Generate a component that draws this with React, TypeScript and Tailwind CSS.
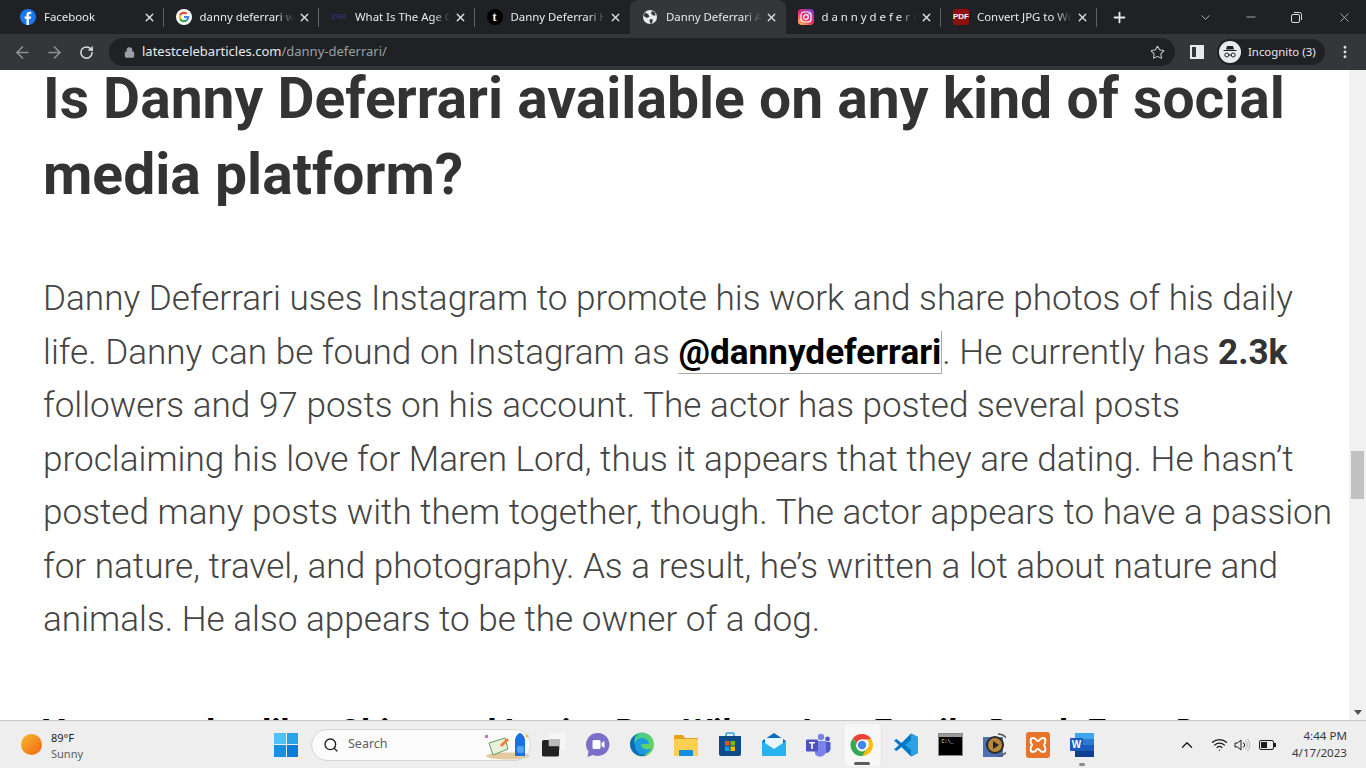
import { ArrowLeft, ArrowRight, ChevronDown, ChevronUp, Lock, Minus, MoreVertical, Plus, RotateCw, Search, Star, Wifi, X } from "lucide-react";
import type { ReactNode } from "react";

const ui = "font-['Noto_Sans','Open_Sans',sans-serif]";

function ChromeIcon({ size = 24 }: { size?: number }) {
  return (
    <svg width={size} height={size} viewBox="0 0 48 48">
      <path d="M24 2a22 22 0 0 1 19 11H24a11 11 0 0 0-10.500 7.500L5.500 11A22 22 0 0 1 24 2z" fill="#ea4335" />
      <path d="M43 13a22 22 0 0 1-18 33l9-15.500A11 11 0 0 0 33 13z" fill="#fbbc05" />
      <path d="M5.500 11A22 22 0 0 0 25 46l9-15.500a11 11 0 0 1-20.500-10z" fill="#34a853" />
      <circle cx="24" cy="24" r="11" fill="#fff" />
      <circle cx="24" cy="24" r="8.500" fill="#4285f4" />
    </svg>
  );
}

const favicons: Record<string, ReactNode> = {
  facebook: (
    <svg width="16" height="16" viewBox="0 0 16 16">
      <circle cx="8" cy="8" r="8" fill="#1877f2" />
      <path d="M8.900 16V9.800h1.900l.4-2.300H8.900V6.100c0-.7.3-1.200 1.300-1.200h1V2.900c-.5-.1-1.100-.2-1.700-.2-1.800 0-3 1.100-3 3.100v1.700H4.600v2.300h1.900V16z" fill="#fff" />
    </svg>
  ),
  google: (
    <svg width="16" height="16" viewBox="0 0 16 16">
      <circle cx="8" cy="8" r="8" fill="#fff" />
      <path d="M13.200 8.100c0-.4 0-.7-.1-1H8v2h2.900c-.1.6-.5 1.200-1.100 1.500l1.700 1.300c1-.9 1.700-2.200 1.700-3.800z" fill="#4285f4" />
      <path d="M8 13.300c1.400 0 2.600-.5 3.500-1.300l-1.700-1.400c-.5.3-1.100.5-1.800.5-1.400 0-2.500-.9-2.900-2.100L3.300 10.400C4.200 12.100 6 13.300 8 13.300z" fill="#34a853" />
      <path d="M5.100 9A3.100 3.100 0 0 1 5.100 7L3.300 5.600a5.300 5.300 0 0 0 0 4.800z" fill="#fbbc05" />
      <path d="M8 4.800c.8 0 1.500.3 2 .8l1.500-1.500A5.200 5.200 0 0 0 3.300 5.600L5.100 7C5.500 5.700 6.600 4.800 8 4.800z" fill="#ea4335" />
    </svg>
  ),
  zgr: <span className="text-[7px] font-bold text-[#3a2d6e] font-['Liberation_Sans',sans-serif]">ZGR</span>,
  tumblr: (
    <span className="flex h-4 w-4 items-center justify-center rounded-full bg-black text-[12px] font-bold leading-none text-white font-['Liberation_Serif',serif]">t</span>
  ),
  globe: (
    <svg width="16" height="16" viewBox="0 0 16 16">
      <circle cx="8" cy="8" r="7" fill="#e8eaed" />
      <path d="M3 3.500 6 5l1.500 2.500L5 9 3.500 8 1.500 7zM10 2l3 1.500.5 3L11 6.500 9 4.500zM8 10l3 .5L10 14l-1.500 1L7.500 12z" fill="#35363a" />
    </svg>
  ),
  instagram: (
    <svg width="16" height="16" viewBox="0 0 16 16">
      <defs>
        <linearGradient id="ig-grad" x1="0.1" y1="1" x2="0.9" y2="0">
          <stop offset="0" stopColor="#fdc14f" />
          <stop offset="0.45" stopColor="#ee2f6b" />
          <stop offset="1" stopColor="#7a3bd1" />
        </linearGradient>
      </defs>
      <rect width="16" height="16" rx="4" fill="url(#ig-grad)" />
      <rect x="3" y="3" width="10" height="10" rx="3" fill="none" stroke="#fff" strokeWidth="1.200" />
      <circle cx="8" cy="8" r="2.300" fill="none" stroke="#fff" strokeWidth="1.200" />
      <circle cx="11" cy="5" r=".7" fill="#fff" />
    </svg>
  ),
  pdf: (
    <span className="flex h-4 w-[18px] items-center justify-center rounded-[2px] bg-[#8f0f0f] text-[8px] font-bold leading-none text-white font-['Liberation_Sans',sans-serif]">PDF</span>
  ),
};

const tabs = [
  { icon: "facebook", title: "Facebook" },
  { icon: "google", title: "danny deferrari wiki" },
  { icon: "zgr", title: "What Is The Age Of" },
  { icon: "tumblr", title: "Danny Deferrari Height" },
  { icon: "globe", title: "Danny Deferrari Age", active: true },
  { icon: "instagram", title: "d a n n y d e f e r r a r i" },
  { icon: "pdf", title: "Convert JPG to Word" },
];

function TabStrip() {
  return (
    <div className={`flex h-[34px] items-stretch bg-[#202124] pl-2 ${ui}`}>
      {tabs.map((t, i) => (
        <div
          key={t.title}
          className={`relative flex w-[155.5px] shrink-0 items-center pl-3 pr-[8px] ${t.active ? "rounded-t-[8px] bg-[#35363a]" : ""}`}
        >
          <div className="flex w-4 shrink-0 items-center justify-center">{favicons[t.icon]}</div>
          <div className="ml-2 min-w-0 flex-1 overflow-hidden whitespace-nowrap text-[11.400px] text-[#e8eaed] [mask-image:linear-gradient(to_right,black_82%,transparent)]">
            {t.title}
          </div>
          <X size={13} strokeWidth={2.5} className="ml-1 shrink-0 text-[#dfe1e5]" />
          {!t.active && !tabs[i + 1]?.active && <div className="absolute right-0 top-[8px] h-[19px] w-px bg-[#5f6368]" />}
        </div>
      ))}
      <div className="ml-[14px] flex items-center">
        <Plus size={17} strokeWidth={2.5} className="text-[#e8eaed]" />
      </div>
      <div className="ml-auto flex items-center text-[#dadce0]">
        <ChevronDown size={15} strokeWidth={1.2} className="mr-[31px]" />
        <Minus size={14} strokeWidth={1.2} className="mr-[33px]" />
        <svg width="11" height="11" viewBox="0 0 11 11" fill="none" stroke="currentColor" className="mr-[35px]">
          <rect x=".5" y="2.500" width="8" height="8" rx="1.500" />
          <path d="M3 .5h5.500a2 2 0 0 1 2 2V8" />
        </svg>
        <X size={15} strokeWidth={1.1} className="mr-[14px]" />
      </div>
    </div>
  );
}

function Toolbar() {
  return (
    <div className={`flex h-9 items-center bg-[#35363a] ${ui}`}>
      <ArrowLeft size={19} strokeWidth={2} className="ml-[13px] text-[#8f9194]" />
      <ArrowRight size={19} strokeWidth={2} className="ml-[13px] text-[#8f9194]" />
      <RotateCw size={15} strokeWidth={2.4} className="ml-[15px] text-[#dadce0]" />
      <div className="ml-[15px] flex h-7 w-[1066px] items-center rounded-full bg-[#202124] pl-[15px]">
        <Lock size={11} strokeWidth={2.5} fill="#9aa0a6" className="text-[#9aa0a6]" />
        <div className="ml-[7px] text-[13px] text-[#e8eaed]">
          latestcelebarticles.com<span className="text-[#9aa0a6]">/danny-deferrari/</span>
        </div>
        <Star size={15} strokeWidth={1.7} className="ml-auto mr-[10px] text-[#c4c7c5]" />
      </div>
      <div className="ml-[15px] flex h-[14px] w-[14px] items-center border-2 border-[#e8eaed]">
        <div className="ml-auto h-full w-[6px] bg-[#e8eaed]" />
      </div>
      <div className="ml-[13px] flex h-[26px] w-[108px] items-center rounded-full bg-[#202124] pl-[2px]">
        <div className="flex h-[22px] w-[22px] items-center justify-center rounded-full bg-[#e8eaed]">
          <svg width="16" height="16" viewBox="0 0 16 16" fill="#202124">
            <path d="M5 2h6l1 3.500H4zM1.500 6h13v1h-13z" />
            <circle cx="4.800" cy="11" r="2" fill="none" stroke="#202124" />
            <circle cx="11.200" cy="11" r="2" fill="none" stroke="#202124" />
            <path d="M6.800 10.500h2.400v1H6.800z" />
          </svg>
        </div>
        <span className="ml-[7px] whitespace-nowrap text-[11.400px] text-[#e8eaed]">Incognito (3)</span>
      </div>
      <MoreVertical size={16} strokeWidth={2.4} className="ml-[12px] text-[#dadce0]" />
    </div>
  );
}

function Article() {
  return (
    <div className="flex h-[650px] overflow-hidden bg-white font-['Roboto',sans-serif]">
      <div className="min-w-0 flex-1 pl-[43px]">
        <h2 className="mt-[-9px] whitespace-nowrap text-[57px] font-bold leading-[76px] text-[#333]">
          Is Danny Deferrari available on any kind of social
          <br />
          media platform?
        </h2>
        <p className="mt-[59px] whitespace-nowrap text-[35.140px] font-light leading-[53.500px] text-[#444]">
          Danny Deferrari uses Instagram to promote his work and share photos of his daily
          <br />
          life. Danny can be found on Instagram as{" "}
          <span className="border-b border-r border-[#aaa] font-bold text-black">@dannydeferrari</span>. He currently has{" "}
          <strong className="font-bold text-[#333]">2.3k</strong>
          <br />
          followers and 97 posts on his account. The actor has posted several posts
          <br />
          proclaiming his love for Maren Lord, thus it appears that they are dating. He hasn’t
          <br />
          posted many posts with them together, though. The actor appears to have a passion
          <br />
          for nature, travel, and photography. As a result, he’s written a lot about nature and
          <br />
          animals. He also appears to be the owner of a dog.
        </p>
        <p className="mt-[59px] whitespace-nowrap text-[35.140px] font-bold text-black">
          You may also like: <em>Chitra and Louise Roe Wilson Age, Family, Death Exes, D</em>
        </p>
      </div>
      <div className="flex w-[17px] shrink-0 flex-col items-center bg-[#f1f1f1] pt-[381px]">
        <div className="h-[48px] w-[13px] bg-[#c1c1c1]" />
        <div className="mt-auto mb-[5px] h-0 w-0 border-x-[4px] border-t-[5px] border-x-transparent border-t-[#505050]" />
      </div>
    </div>
  );
}

const B = ({ children }: { children: ReactNode }) => (
  <div className="flex h-[40px] w-[44px] shrink-0 items-center justify-center">{children}</div>
);

function TaskIcons() {
  return (
    <>
      <B>
        <div className="relative h-6 w-6">
          <div className="absolute right-0 top-0 h-[17px] w-[17px] rounded-[2px] bg-[#f5f5f5]" />
          <div className="absolute left-[7px] top-[6px] h-[11px] w-[11px] bg-[#bbb]" />
          <div className="absolute bottom-0 left-0 h-[17px] w-[17px] rounded-[2px] bg-[#222] [clip-path:polygon(0_0,40%_0,40%_40%,100%_40%,100%_100%,0_100%)]" />
        </div>
      </B>
      <B>
        <svg width="24" height="26" viewBox="0 0 24 26">
          <path d="M12 1a11.500 11.500 0 1 1-5 21.900L1.500 25l1-5.500A11.500 11.500 0 0 1 12 1z" fill="#7b6fc9" />
          <rect x="6.500" y="8" width="8" height="9" rx="1.500" fill="#fff" />
          <path d="m15.500 11 3-2v7l-3-2z" fill="#fff" />
        </svg>
      </B>
      <B>
        <svg width="24" height="25" viewBox="0 0 24 24">
          <defs>
            <linearGradient id="edge-a" x1="0" y1="0" x2="1" y2="1">
              <stop offset="0" stopColor="#36c6a0" />
              <stop offset="1" stopColor="#7ad84b" />
            </linearGradient>
          </defs>
          <circle cx="12" cy="12" r="12" fill="url(#edge-a)" />
          <path d="M0 12C0 5 5.500 1 11 1c-5 0-7 4-6.500 9 .5 7 6 12 12.500 12.500A12 12 0 0 1 0 12z" fill="#0f6cbd" />
          <path d="M5 12c0-4 3-6.500 7-6.500s7 2.500 7 6h-7c-1.500 0-1 3 1.500 4.500 2.500 1.500 6 1.200 8-.5-1.500 4-5 6.500-9 6.500C7.500 22 5 17 5 12z" fill="#1a9be0" />
        </svg>
      </B>
      <B>
        <svg width="24" height="24" viewBox="0 0 24 24">
          <path d="M0 3a1 1 0 0 1 1-1h8l2 3h12a1 1 0 0 1 1 1v2H0z" fill="#e4a11b" />
          <rect y="6" width="24" height="17" rx="1" fill="#fcd053" />
          <rect x="5" y="17" width="14" height="6" rx="1" fill="#0f8fdd" />
        </svg>
      </B>
      <B>
        <svg width="24" height="25" viewBox="0 0 24 25">
          <path d="M8 5V2.500A1.500 1.500 0 0 1 9.500 1h5A1.500 1.500 0 0 1 16 2.500V5" fill="none" stroke="#29a7e1" strokeWidth="1.600" />
          <path d="M1 4h22v18a2 2 0 0 1-2 2H3a2 2 0 0 1-2-2z" fill="#0f4b8a" />
          <rect x="7" y="9" width="4.500" height="4.500" fill="#f25022" />
          <rect x="12.500" y="9" width="4.500" height="4.500" fill="#7fba00" />
          <rect x="7" y="14.500" width="4.500" height="4.500" fill="#00a4ef" />
          <rect x="12.500" y="14.500" width="4.500" height="4.500" fill="#ffb900" />
        </svg>
      </B>
      <B>
        <svg width="24" height="25" viewBox="0 0 24 25">
          <path d="M0 9 12 1l12 8v14H0z" fill="#0b6cb8" />
          <path d="M3 6h18v8l-9 5-9-5z" fill="#eaf6fd" />
          <path d="M0 9l12 8 12-8v14a1 1 0 0 1-1 1H1a1 1 0 0 1-1-1z" fill="#29b3ec" />
        </svg>
      </B>
      <B>
        <svg width="25" height="24" viewBox="0 0 25 24">
          <circle cx="15" cy="4" r="3.200" fill="#7b83eb" />
          <circle cx="21.500" cy="6" r="2.400" fill="#5059c9" />
          <path d="M18 9h6.500v7a4 4 0 0 1-6.500 3z" fill="#5059c9" />
          <path d="M9 8h11v10a6 6 0 0 1-11 3z" fill="#7b83eb" />
          <rect y="6.500" width="12" height="12" rx="1.200" fill="#4b53bc" />
          <path d="M3 9h6v1.500H6.800V16H5.200v-5.500H3z" fill="#fff" />
        </svg>
      </B>
      <div className="relative mx-[5px] flex h-[42px] w-[34px] shrink-0 items-center justify-center rounded-[4px] bg-[#f7f7f7] shadow-[2px_0_0_#f7f7f7,3px_0_0_#e3e3e3]">
        <ChromeIcon />
        <div className="absolute bottom-[1px] left-[9px] h-[3px] w-4 rounded-full bg-[#5c5c5c]" />
      </div>
      <B>
        <svg width="24" height="24" viewBox="0 0 24 24">
          <path d="M17 .5 24 4v16l-7 3.500L7.500 14 2.500 18 0 16.500 5 12 0 7.500 2.500 6l5 4z" fill="#0078c8" />
          <path d="M17 .5 24 4v16l-7 3.500zM17 7l-6 5 6 5z" fill="#2aa2e8" fillRule="evenodd" />
        </svg>
      </B>
      <B>
        <div className="h-[21px] w-[23px] border-t-[3px] border-[#9a9a9a] bg-black pl-[3px] pt-[2px] font-['Liberation_Mono',monospace] text-[5px] leading-[6px] text-white shadow-[0_0_0_1px_#888]">
          C:\_
        </div>
      </B>
      <B>
        <svg width="24" height="26" viewBox="0 0 24 26">
          <rect x="1" y="5" width="20" height="20" fill="#4d6fb5" />
          <circle cx="13" cy="13" r="9" fill="#2a2a2a" />
          <circle cx="13" cy="13" r="7" fill="#b9873a" />
          <path d="m11 9 6 4-6 4z" fill="#222" />
          <path d="M16 2a11 11 0 0 1 0 22" fill="none" stroke="#555" strokeWidth="1.500" />
        </svg>
      </B>
      <B>
        <svg width="24" height="26" viewBox="0 0 24 26">
          <rect width="24" height="26" rx="3" fill="#e8742a" />
          <path d="M7 6c3 0 3 3 5 3s2-3 5-3 3 4 1 7c2 3 2 7-1 7s-3-3-5-3-2 3-5 3-3-4-1-7C4 10 4 6 7 6z" fill="none" stroke="#fff" strokeWidth="2" />
        </svg>
      </B>
      <div className="relative flex h-[42px] w-[44px] shrink-0 items-center justify-center">
        <svg width="24" height="24" viewBox="0 0 24 24">
          <rect x="5" width="19" height="6" fill="#41a5ee" />
          <rect x="5" y="6" width="19" height="6" fill="#2b7cd3" />
          <rect x="5" y="12" width="19" height="6" fill="#185abd" />
          <rect x="5" y="18" width="19" height="6" fill="#103f91" />
          <rect y="5" width="13" height="13" rx="1" fill="#1a5cb8" />
          <text x="6.500" y="15" textAnchor="middle" fontSize="10" fontWeight="700" fill="#fff" fontFamily="Liberation Sans">W</text>
        </svg>
        <div className="absolute bottom-0 left-[19px] h-[3px] w-[6px] rounded-full bg-[#8a8a8a]" />
      </div>
    </>
  );
}

function Taskbar() {
  return (
    <div className={`flex h-[48px] items-center border-t border-[#c8c8c8] bg-[#eeeeee] ${ui}`}>
      <div className="ml-[21px] h-[21px] w-[21px] rounded-full bg-gradient-to-br from-[#f2b92c] to-[#f3620f]" />
      <div className="ml-[9px] mt-[2px] w-[50px] text-[11px] leading-[16px]">
        <div className="text-[#1c1c1c]">89°F</div>
        <div className="text-[#5c5c5c]">Sunny</div>
      </div>
      <div className="ml-[173px] grid h-[24px] w-[24px] grid-cols-2 gap-[1px]">
        <div className="bg-[#4fc3f7]" />
        <div className="bg-[#29a3e8]" />
        <div className="bg-[#1890e0]" />
        <div className="bg-[#0b7cd6]" />
      </div>
      <div className="ml-[13px] flex h-[32px] w-[220px] items-center rounded-full border border-[#d5d5d5] bg-[#fbfbfb] pl-[11px]">
        <Search size={16} strokeWidth={2} className="text-[#1c1c1c]" />
        <span className="ml-[9px] text-[12.500px] text-[#5f5f5f]">Search</span>
        <svg width="46" height="30" viewBox="0 0 46 30" className="ml-auto mr-[1px]">
          <ellipse cx="25" cy="26" rx="22" ry="3.500" fill="#e3c9a0" />
          <path d="M6 13 22 8l3 11-15 6z" fill="#e8f2d8" stroke="#5f9e5f" />
          <path d="m17 15 7-7 2 2-7 7z" fill="#f07f3c" />
          <rect x="2" y="5" width="3" height="3" fill="#d66bd6" />
          <path d="M32 26V10c0-3 3-7 5-7s5 4 5 7v16z" fill="#1673e0" />
          <rect x="34" y="16" width="7" height="7" rx="2" fill="#4fa3f5" />
          <circle cx="44" cy="6" r="1.500" fill="#f8bd2a" />
        </svg>
      </div>
      <div className="ml-[1px] flex items-center">
        <TaskIcons />
      </div>
      <div className="ml-auto flex items-center text-[#1c1c1c]">
        <ChevronUp size={18} strokeWidth={1.8} />
        <Wifi size={17} strokeWidth={1.8} className="ml-[15px]" />
        <svg width="17" height="16" viewBox="0 0 17 16" fill="none" className="ml-[6px]">
          <path d="M1 6h2.500L7 3v10L3.500 10H1z" stroke="#1c1c1c" />
          <path d="M9.500 5.500a3.500 3.500 0 0 1 0 5" stroke="#1c1c1c" />
          <path d="M11.500 3.500a6.500 6.500 0 0 1 0 9M13.500 2a9 9 0 0 1 0 12" stroke="#b5b5b5" />
        </svg>
        <div className="ml-[8px] flex h-[10px] w-[15px] items-center rounded-[2px] border border-[#1c1c1c] p-[1px]">
          <div className="h-full w-[6px] bg-[#1c1c1c]" />
        </div>
        <div className="h-1 w-[2px] bg-[#1c1c1c]" />
        <div className="ml-[3px] mr-[19px] w-[68px] text-right text-[11.600px] leading-[16.500px] text-[#3a3a3a]">
          <div>4:44 PM</div>
          <div>4/17/2023</div>
        </div>
      </div>
    </div>
  );
}

export default function App() {
  return (
    <div className="h-[768px] w-[1366px] overflow-hidden bg-white">
      <TabStrip />
      <Toolbar />
      <Article />
      <Taskbar />
    </div>
  );
}
